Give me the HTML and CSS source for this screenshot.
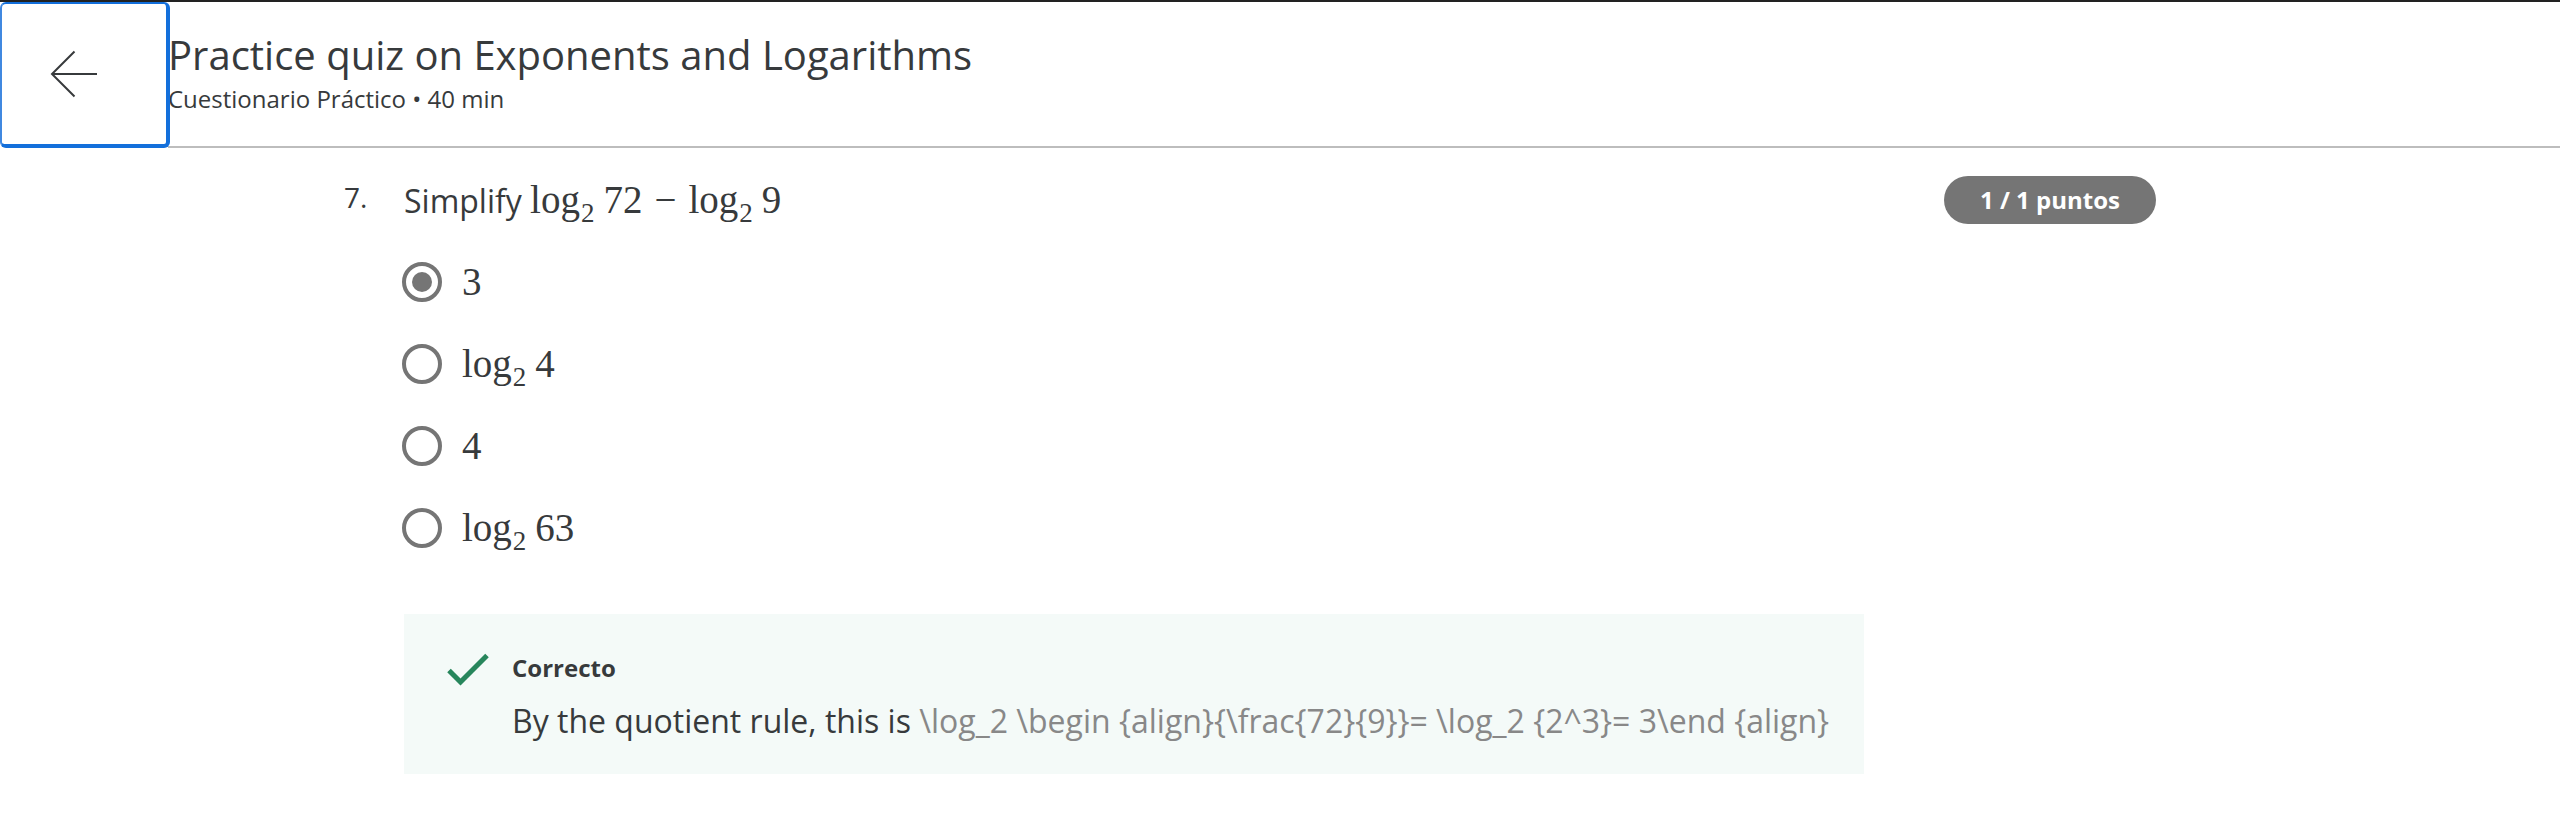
FILE: index.html
```html
<!DOCTYPE html>
<html lang="es">
<head>
<meta charset="utf-8">
<title>Practice quiz on Exponents and Logarithms</title>
<link rel="stylesheet" href="styles.css">
</head>
<body>
<header class="header">
  <button class="back" type="button" aria-label="Volver">
    <svg class="back-icon" viewBox="0 0 48 48" aria-hidden="true"><path d="M47 24H2M24.500 1.500L2 24l22.500 22.500"/></svg>
  </button>
  <div class="heading">
    <h1 class="title">Practice quiz on Exponents and Logarithms</h1>
    <p class="subtitle">Cuestionario Práctico • 40 min</p>
  </div>
</header>
<main class="question">
  <div class="number">7.</div>
  <div class="body">
    <p class="prompt" id="prompt">Simplify <span class="math">log<sub>2</sub><span class="arg">72</span><span class="op">−</span>log<sub>2</sub><span class="arg">9</span></span></p>
    <div class="options" role="radiogroup" aria-labelledby="prompt">
      <label class="option"><input class="radio" type="radio" name="answer" checked><span class="math">3</span></label>
      <label class="option"><input class="radio" type="radio" name="answer"><span class="math">log<sub>2</sub><span class="arg">4</span></span></label>
      <label class="option"><input class="radio" type="radio" name="answer"><span class="math">4</span></label>
      <label class="option"><input class="radio" type="radio" name="answer"><span class="math">log<sub>2</sub><span class="arg">63</span></span></label>
    </div>
    <section class="feedback">
      <svg class="check" viewBox="0 0 42 34" aria-hidden="true"><path d="M2 17.500L13.500 29L40 2.500"/></svg>
      <div>
        <h2 class="verdict">Correcto</h2>
        <p class="explain">By the quotient rule, this is <span class="tex">\log_2 \begin {align}{\frac{72}{9}}= \log_2 {2^3}= 3\end {align}</span></p>
      </div>
    </section>
  </div>
  <div class="points">1 / 1 puntos</div>
</main>
</body>
</html>
```
FILE: styles.css
```css
* {
  box-sizing: border-box;
}

body {
  margin: 0;
  background: #fff;
  color: #373a3c;
  font-family: "Open Sans", "Noto Sans", sans-serif;
}

h1, h2, p {
  margin: 0;
  font-weight: 400;
}

.header {
  display: flex;
  border-top: 2px solid #222;
}

.back {
  z-index: 1;
  display: flex;
  align-items: center;
  width: 170px;
  height: 146px;
  margin-right: -2px;
  padding: 0 0 0 48px;
  border: 4px solid #136fdb;
  border-width: 2px 4px 4px 2px;
  border-left-color: #4088e0;
  border-radius: 6px;
  background: #fff;
}

.back-icon {
  width: 48px;
  height: 48px;
  fill: none;
  stroke: #373a3c;
  stroke-width: 2;
}

.heading {
  flex: 1;
  padding-top: 25px;
  border-bottom: 2px solid #bdbdbd;
}

.title {
  font-size: 40px;
  line-height: 56px;
}

.subtitle {
  font-size: 24px;
  line-height: 32px;
}

.question {
  display: flex;
  align-items: flex-start;
  padding: 28px 404px 0 344px;
}

.number {
  width: 60px;
  font-size: 28px;
  line-height: 42px;
}

.body {
  flex: 1;
}

.prompt {
  font-size: 32px;
  line-height: 48px;
}

.math {
  font-family: "Liberation Serif", serif;
  font-size: 39px;
  line-height: 48px;
}

.math sub {
  margin-left: 1px;
  font-size: 27px;
  line-height: 0;
  vertical-align: -9px;
}

.arg {
  margin-left: 9px;
}

.op {
  margin: 0 12px;
}

.options {
  display: flex;
  flex-direction: column;
  gap: 34px;
  padding-top: 33px;
}

.option {
  display: flex;
  align-items: center;
  gap: 20px;
  height: 48px;
}

.radio {
  appearance: none;
  display: grid;
  place-items: center;
  width: 40px;
  height: 40px;
  margin: 0 0 0 -2px;
  border: 4px solid #757575;
  border-radius: 50%;
}

.radio:checked::before {
  content: "";
  width: 20px;
  height: 20px;
  border-radius: 50%;
  background: #757575;
}

.feedback {
  display: flex;
  gap: 23px;
  margin-top: 62px;
  padding: 36px 32px 29px 43px;
  background: #f4faf8;
}

.check {
  flex: none;
  width: 42px;
  height: 34px;
  margin-top: 3px;
  fill: none;
  stroke: #27865c;
  stroke-width: 5;
}

.verdict {
  font-size: 24px;
  font-weight: 700;
  line-height: 36px;
}

.explain {
  margin-top: 11px;
  font-size: 32px;
  line-height: 48px;
}

.tex {
  color: #888;
}

.points {
  margin-left: 80px;
  padding: 0 36px;
  border-radius: 24px;
  background: #757575;
  color: #fff;
  font-size: 24px;
  font-weight: 700;
  line-height: 48px;
  white-space: nowrap;
}
```
